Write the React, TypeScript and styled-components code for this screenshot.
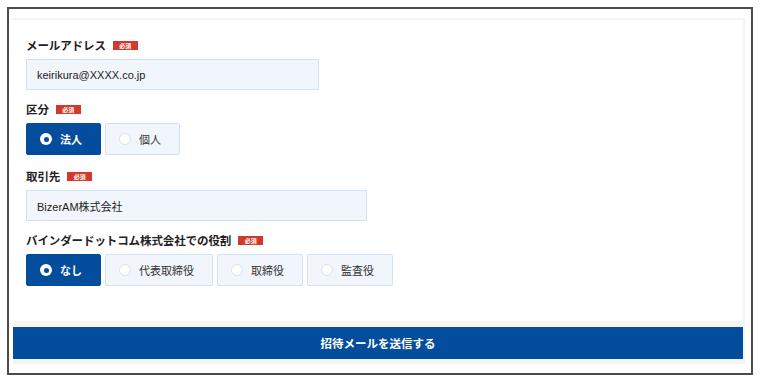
import React, { useState } from "react";
import styled, { createGlobalStyle } from "styled-components";

const Global = createGlobalStyle`
  html, body { margin: 0; padding: 0; background: #ffffff; }
  body { width: 760px; height: 382px; overflow: hidden; font-family: "Liberation Sans", "Noto Sans CJK JP", sans-serif; color: #222; }
  * { box-sizing: border-box; }
`;

const Frame = styled.div`
  margin: 7px;
  width: 746px;
  height: 368px;
  border: 2px solid #4d4a48;
  padding: 9px 6px 9px 4px;
  background: #fff;
`;

const Panel = styled.div`
  background: #f4f4f4;
  padding: 2px 2px 5px 0;
  display: flex;
  flex-direction: column;
`;

const Card = styled.div`
  background: #fff;
  height: 301px;
  padding: 17px 13px 0;
  display: flex;
  flex-direction: column;
`;

const Field = styled.div<{ $after: number }>`
  display: flex;
  flex-direction: column;
  margin-bottom: ${(p) => p.$after}px;
`;

const LabelRow = styled.div`
  display: flex;
  align-items: center;
  gap: 7px;
  height: 16px;
  margin-bottom: 6px;
`;

const Label = styled.span`
  font-family: "Noto Sans CJK JP", sans-serif;
  font-weight: 700;
  font-size: 11.5px;
  color: #222;
  letter-spacing: -0.1px;
`;

const Badge = styled.span`
  display: inline-flex;
  align-items: center;
  justify-content: center;
  width: 25px;
  height: 9px;
  background: #d2392c;
  color: #fff;
  font-family: "Noto Sans CJK JP", sans-serif;
  font-weight: 700;
  font-size: 6px;
  line-height: 9px;
`;

const Input = styled.div<{ $w: number }>`
  width: ${(p) => p.$w}px;
  height: 31px;
  background: #f1f6fc;
  border: 1px solid #d3e2f3;
  display: flex;
  align-items: center;
  padding-left: 10px;
  font-family: "Liberation Sans", "Noto Sans CJK JP", sans-serif;
  font-size: 11px;
  color: #222;
`;

const RadioRow = styled.div`
  display: flex;
  gap: 4px;
`;

const Option = styled.div<{ $on: boolean }>`
  height: 32px;
  min-width: 75px;
  display: flex;
  align-items: center;
  gap: 8px;
  padding: 0 18px 0 13px;
  border-radius: 2px;
  background: ${(p) => (p.$on ? "#044c9c" : "#f1f6fc")};
  border: 1px solid ${(p) => (p.$on ? "#044c9c" : "#d3e2f3")};
  color: ${(p) => (p.$on ? "#fff" : "#333")};
  font-family: "Noto Sans CJK JP", sans-serif;
  font-weight: ${(p) => (p.$on ? 700 : 400)};
  font-size: 11px;
  cursor: pointer;
`;

const Dot = styled.span`
  width: 12px;
  height: 12px;
  border-radius: 50%;
  background: #fff;
  flex: none;
  border: 1px solid #d3e2f3;
`;

const SelectedDot = styled.span`
  width: 12px;
  height: 12px;
  border-radius: 50%;
  background: #fff;
  flex: none;
  display: flex;
  align-items: center;
  justify-content: center;
  &::after {
    content: "";
    width: 5px;
    height: 5px;
    border-radius: 50%;
    background: #044c9c;
  }
`;

const Footer = styled.div`
  padding-top: 6px;
`;

const Submit = styled.button`
  width: 100%;
  height: 32px;
  border: none;
  background: #044c9c;
  color: #fff;
  font-family: "Noto Sans CJK JP", sans-serif;
  font-weight: 700;
  font-size: 11.5px;
  display: flex;
  align-items: center;
  justify-content: center;
  cursor: pointer;
`;

function Radios({ options, value, onChange }: { options: string[]; value: string; onChange: (v: string) => void }) {
  return (
    <RadioRow>
      {options.map((o) => (
        <Option key={o} $on={o === value} onClick={() => onChange(o)}>
          {o === value ? <SelectedDot /> : <Dot />}
          <span>{o}</span>
        </Option>
      ))}
    </RadioRow>
  );
}

export default function App() {
  const [kind, setKind] = useState("法人");
  const [role, setRole] = useState("なし");
  return (
    <>
      <Global />
      <Frame>
        <Panel>
          <Card>
            <Field $after={11}>
              <LabelRow>
                <Label>メールアドレス</Label>
                <Badge>必須</Badge>
              </LabelRow>
              <Input $w={293}>keirikura@XXXX.co.jp</Input>
            </Field>
            <Field $after={13}>
              <LabelRow>
                <Label>区分</Label>
                <Badge>必須</Badge>
              </LabelRow>
              <Radios options={["法人", "個人"]} value={kind} onChange={setKind} />
            </Field>
            <Field $after={11}>
              <LabelRow>
                <Label>取引先</Label>
                <Badge>必須</Badge>
              </LabelRow>
              <Input $w={341}>BizerAM株式会社</Input>
            </Field>
            <Field $after={0}>
              <LabelRow>
                <Label>バインダードットコム株式会社での役割</Label>
                <Badge>必須</Badge>
              </LabelRow>
              <Radios options={["なし", "代表取締役", "取締役", "監査役"]} value={role} onChange={setRole} />
            </Field>
          </Card>
          <Footer>
            <Submit>招待メールを送信する</Submit>
          </Footer>
        </Panel>
      </Frame>
    </>
  );
}
